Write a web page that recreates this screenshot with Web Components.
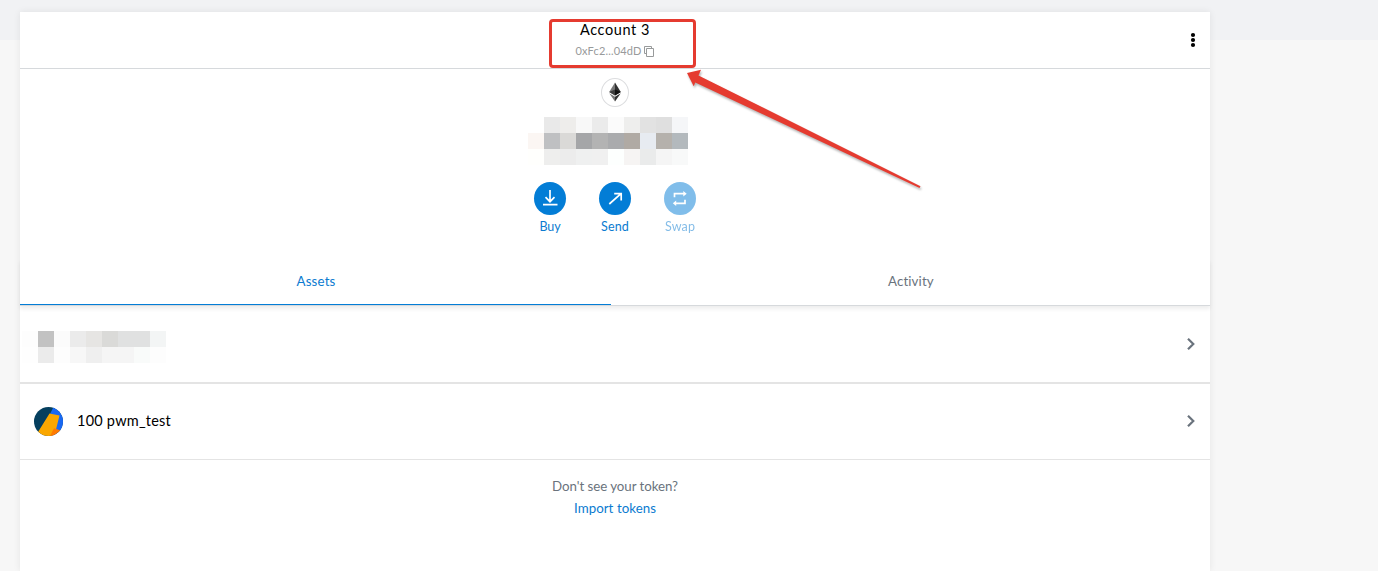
<!DOCTYPE html>
<html lang="en"><head><meta charset="utf-8"><title>Wallet</title>
<style>
html,body{margin:0;height:100%;overflow:hidden}
body{background:linear-gradient(#f1f2f4 40px,#f7f7f7 40px);font-family:Lato,"Open Sans",sans-serif}
</style></head><body>
<wallet-page></wallet-page>
<script>
const define=(name,html,init)=>customElements.define(name,class extends HTMLElement{
  constructor(){super();this.attachShadow({mode:'open'})}
  connectedCallback(){
    const t=document.createElement('template');t.innerHTML=html;
    this.shadowRoot.replaceChildren(t.content.cloneNode(true));
    if(init)init.call(this,this.shadowRoot);
  }
});

// One line of text whose tracking is adjusted to fill the given width.
define('fit-text',`<style>:host{display:block;white-space:nowrap;flex:none}span{display:inline-block}</style><span><slot></slot></span>`,function(r){
  const w=+this.getAttribute('w'),s=r.querySelector('span');
  this.style.width=w+'px';
  const n=this.textContent.length;
  s.style.letterSpacing=((w-s.getBoundingClientRect().width)/n)+'px';
});

// Pixelated block that hides a private value.
define('pixel-mask',`<style>:host{display:grid;grid-auto-rows:16px;flex:none}i{display:block}</style>`,function(r){
  const rows=this.getAttribute('rows').split('|').map(x=>x.trim().split(' '));
  this.style.gridTemplateColumns=`repeat(${rows[0].length},16px)`;
  rows.flat().forEach(c=>{const i=document.createElement('i');i.style.background='#'+c;r.append(i)});
});

define('account-header',`<style>
:host{display:grid;grid-template-columns:1fr 147px 1fr;height:56px;border-bottom:1px solid #d6d9dc;flex:none}
.acc{grid-column:2;display:flex;flex-direction:column;align-items:center;box-sizing:border-box;
 width:147px;height:49px;margin:7px 0 0 7px;border:3px solid #e53b30;border-radius:4px;padding-right:14px}
.n{font-size:14.5px;line-height:18px;color:#000;margin:-1px 0 0 0}
.a{display:flex;align-items:center;font-size:11px;line-height:14px;color:#989a9b;margin-top:5px}
.a svg{margin:1px 0 0 2px}
.m{grid-column:3;justify-self:end;margin:20px 14px 0 0}
</style>
<div class="acc"><fit-text class="n" w="70">Account 3</fit-text>
<div class="a"><fit-text w="66">0xFc2...04dD</fit-text><svg width="11" height="11" fill="none" stroke="#989a9b"><path d="M2.5 7.5h-2v-7h7v2M2.5 2.5h7v8h-7z"/></svg></div></div>
<svg class="m" width="6" height="16"><circle cx="3" cy="3" r="2.1"/><circle cx="3" cy="8" r="2.1"/><circle cx="3" cy="13" r="2.1"/></svg>`);

define('round-action',`<style>
:host{display:flex;flex-direction:column;align-items:center;width:65px;color:#0b7bd0;font-size:12.5px;line-height:16px}
:host([disabled]) {opacity:.5}
.c{width:32px;height:33px;border-radius:50%;background:#037dd6;margin-bottom:4px}
</style><div class="c"><slot name="icon"></slot></div><slot></slot>`);

define('account-overview',`<style>
:host{display:flex;flex-direction:column;align-items:center;height:190px;flex:none}
.e{width:26px;height:27px;border:1px solid #dcdddf;border-radius:50%;margin-top:9px}
.e svg{display:block}
pixel-mask{margin:10px 14px 0 0}
.b{display:flex;margin-top:17px}
svg{display:block}
</style>
<div class="e"><svg width="26" height="27"><path fill="#777" d="M13 3.5 7.2 13 13 16.4z"/><path fill="#303030" d="M13 3.5 18.8 13 13 16.4z"/><path fill="#3d3d3d" d="m7.2 13 5.8-2.6v6z"/><path fill="#111" d="m18.8 13-5.8-2.6v6z"/><path fill="#777" d="m7.2 14.2 5.8 3.5v4.9z"/><path fill="#333" d="M18.8 14.2 13 17.7v4.9z"/></svg></div>
<pixel-mask rows="ffffff e9e9e9 eeedeb f8f8f8 ebebeb fbfbfb eeeeed e2e2e2 dfdfdf f5f6f8|fbf6f3 bfc0c2 dad9d7 a5a6a8 b3b3b3 aaabad b0aaa4 e7ebf1 b5b1ac b3b9bd|fffffd eeeeed ececec eff0f0 f0f0f0 fdfffe f6f4f3 eaebeb f5f5f5 f8f9f9"></pixel-mask>
<div class="b">
<round-action><svg slot="icon" width="32" height="33" fill="none" stroke="#fff" stroke-width="1.7"><path d="M16 8v12M11.5 15.2l4.5 4.5 4.5-4.5M9 22.6h14.5"/></svg><fit-text w="21">Buy</fit-text></round-action>
<round-action><svg slot="icon" width="32" height="33" fill="none" stroke="#fff" stroke-width="1.7"><path d="M10.3 22 22 11.7M15.2 11.7H22.2v6.8"/></svg><fit-text w="28">Send</fit-text></round-action>
<round-action disabled><svg slot="icon" width="32" height="33" fill="none" stroke="#fff" stroke-width="1.7"><path d="M10.5 15.3v-3.6h9.5M21 17.8v3.5h-9.5"/><path fill="#fff" stroke="none" d="m19.3 8.9 3.4 2.8-3.4 2.8zM12.2 18.5l-3.4 2.8 3.4 2.8z"/></svg><fit-text w="30">Swap</fit-text></round-action>
</div>`);

define('tab-bar',`<style>
:host{display:flex;height:46px;flex:none;border-bottom:1px solid #d6d9dc;box-shadow:0 3px 4px rgba(0,0,0,.07);font-size:13.3px;line-height:45px}
div{display:flex;justify-content:center;box-sizing:border-box;height:46px}
.s{width:591px;border-bottom:1px solid #037dd6;color:#0b7bd0}
.t{flex:1;color:#6a737d}
fit-text{padding-left:1px}
</style><div class="s"><fit-text w="39">Assets</fit-text></div><div class="t"><fit-text w="46">Activity</fit-text></div>`);

define('asset-row',`<style>
:host{display:flex;align-items:center;box-sizing:border-box;flex:none;border-bottom:var(--line,1px) solid #e4e4e4}
.x{margin:var(--arrow-top,0) 14px 0 auto}
</style><slot></slot><svg class="x" width="10" height="14" fill="none" stroke="#6a737d" stroke-width="2.2"><path d="m2 1.7 5.3 5.3L2 12.3"/></svg>`);

// Callout arrow that points at the account box.
define('callout-arrow',`<style>:host{position:absolute;left:680px;top:64px;pointer-events:none}svg{display:block;filter:drop-shadow(1px 2px 1px rgba(0,0,0,.3))}</style>
<svg width="250" height="130"><path fill="#e53b30" d="M7 9 21 5.8 18.5 11.4 240.5 122.2 239.5 124 15.3 18.6 13.7 22.3z"/></svg>`);

define('wallet-page',`<style>
:host{display:block;padding:12px 168px 0 20px}
main{display:flex;flex-direction:column;height:559px;background:#fff;box-shadow:0 0 7px rgba(0,0,0,.08)}
.one{--line:2px;height:78px;padding-left:2px}.two{--arrow-top:-2px;height:76px;padding-left:14px}
.one pixel-mask{margin-top:5px}
.name{font-size:14.5px;color:#000;margin:-2px 0 0 14px}
footer{display:flex;flex-direction:column;align-items:center;padding-top:15px;font-size:13.3px;line-height:22px;color:#6a737d}
.link{color:#0b7bd0}
</style>
<main><account-header></account-header><account-overview></account-overview><tab-bar></tab-bar>
<asset-row class="one"><pixel-mask rows="fdfdfd c2c2c2 fbfbfb ebebeb e6e5e3 dadad8 e0e1e1 e0e1e1 f3f5f5|fefefe ebebeb fdfdfd f7f7f7 efefef f5f5f5 f5f5f5 f9fbfa fdfdfd"></pixel-mask></asset-row>
<asset-row class="two"><svg width="29" height="29"><defs><clipPath id="c"><circle cx="14.5" cy="14.5" r="14.5"/></clipPath></defs><g clip-path="url(#c)"><path fill="#053f5e" d="M0 0h29v29H0z"/><path fill="#1868f2" d="M19.5 0H29v29h-9l-4-22z"/><path fill="#faa700" d="m15.5 6.5 10 2-3.5 14L18 29H0l4-4z"/><path fill="#ff7a00" d="m20 21.3 9 3V29H16z"/></g></svg><fit-text class="name" w="94">100 pwm_test</fit-text></asset-row>
<footer><fit-text w="126">Don't see your token?</fit-text><fit-text class="link" w="82">Import tokens</fit-text></footer></main>
<callout-arrow></callout-arrow>`);
</script></body></html>
